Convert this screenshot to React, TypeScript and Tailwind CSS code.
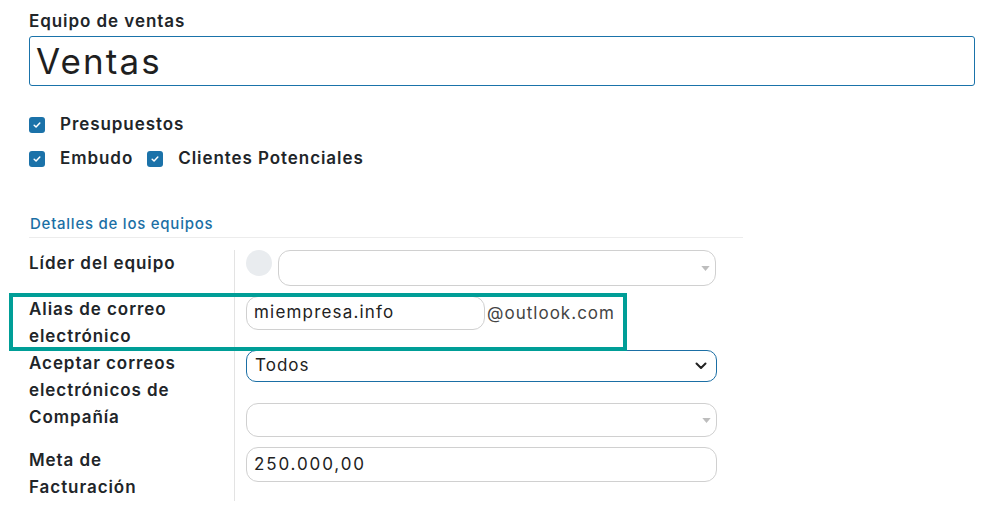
import React from 'react';

const font = { fontFamily: 'Inter, "Noto Sans", sans-serif' };

const Check: React.FC = () => (
  <span className="flex h-4 w-4 shrink-0 items-center justify-center rounded-[3px] bg-[#1b72a9]">
    <svg viewBox="0 0 16 16" className="h-[10px] w-[10px]" fill="none">
      <path d="M3.5 8.3l3 2.8 6-6.2" stroke="white" strokeWidth="2.4" strokeLinecap="round" strokeLinejoin="round" />
    </svg>
  </span>
);

const Caret: React.FC = () => (
  <svg viewBox="0 0 10 6" className="h-[5px] w-[9px]">
    <path d="M0 0h10L5 6z" fill="#bdbdbd" />
  </svg>
);

const Chevron: React.FC = () => (
  <svg viewBox="0 0 12 8" className="h-[8px] w-[12px]" fill="none">
    <path d="M1.5 1.5L6 6l4.5-4.5" stroke="#222" strokeWidth="2" strokeLinecap="round" strokeLinejoin="round" />
  </svg>
);

const Label: React.FC<{ children: React.ReactNode }> = ({ children }) => (
  <div className="text-[17px] font-semibold leading-[27px] tracking-[0.055em] text-[#212529]">{children}</div>
);

export default function App() {
  return (
    <div className="h-[515px] w-[990px] overflow-hidden bg-white pl-[29px] pt-[9px]" style={font}>
      <div className="text-[17px] font-semibold leading-[24px] tracking-[0.055em] text-[#212529]">Equipo de ventas</div>
      <div className="mt-[3px] flex h-[50px] w-[946px] items-center rounded-[3px] border border-[#1a73aa] pl-[6px] text-[35px] leading-none tracking-[0.06em] text-[#1f1f1f]">
        Ventas
      </div>

      <div className="mt-[27px] flex h-[24px] items-center gap-[15px]">
        <Check />
        <span className="text-[17px] font-semibold tracking-[0.055em] text-[#212529]">Presupuestos</span>
      </div>
      <div className="mt-[10px] flex h-[24px] items-center">
        <Check />
        <span className="ml-[15px] text-[17px] font-semibold tracking-[0.055em] text-[#212529]">Embudo</span>
        <span className="ml-[14px]"><Check /></span>
        <span className="ml-[15px] text-[17px] font-semibold tracking-[0.055em] text-[#212529]">Clientes Potenciales</span>
      </div>

      <div className="mt-[41px] h-[26px] w-[714px] border-b border-[#ececec] pl-[1px] text-[15px] font-medium leading-[24px] tracking-[0.05em] text-[#1b6fa5]">
        Detalles de los equipos
      </div>

      <div className="mt-[12px] grid w-[700px] grid-cols-[205px_1fr]">
        {/* Líder */}
        <div className="pb-[10px]"><Label>Líder del equipo</Label></div>
        <div className="flex items-start gap-[6px] border-l border-[#e3e3e3] pb-[10px] pl-[11px]">
          <span className="h-[26px] w-[26px] shrink-0 rounded-full bg-[#e9ecef]" />
          <div className="flex h-[36px] w-[438px] items-center justify-end rounded-[12px] border border-[#d0d0d0] pr-[5px]">
            <Caret />
          </div>
        </div>

        {/* Alias */}
        <div className="relative">
          <Label>Alias de correo<br />electrónico</Label>
          <div className="pointer-events-none absolute left-[-20px] top-[-3px] h-[58px] w-[618px] border-[4px] border-[#009e97]" />
        </div>
        <div className="flex items-start border-l border-[#e3e3e3] pl-[11px]">
          <div className="flex h-[34px] w-[239px] items-center rounded-[12px] border border-[#d0d0d0] pl-[7px] text-[17px] tracking-[0.07em] text-[#222]">
            miempresa.info
          </div>
          <span className="ml-[2px] mt-[4px] text-[17px] leading-[27px] tracking-[0.06em] text-[#444]">@outlook.com</span>
        </div>

        {/* Aceptar */}
        <div><Label>Aceptar correos<br />electrónicos de</Label></div>
        <div className="border-l border-[#e3e3e3] pl-[11px]">
          <div className="flex h-[32px] w-[471px] items-center justify-between rounded-[10px] border border-[#1b6fa5] pl-[8px] pr-[9px] text-[17px] tracking-[0.06em] text-[#222]">
            <span>Todos</span>
            <Chevron />
          </div>
        </div>

        {/* Compañía */}
        <div className="pb-[10px]"><Label>Compañía</Label></div>
        <div className="border-l border-[#e3e3e3] pb-[10px] pl-[11px]">
          <div className="-mt-[1px] flex h-[34px] w-[471px] items-center justify-end rounded-[12px] border border-[#d0d0d0] pr-[5px]">
            <Caret />
          </div>
        </div>

        {/* Meta */}
        <div><Label>Meta de<br />Facturación</Label></div>
        <div className="border-l border-[#e3e3e3] pl-[11px]">
          <div className="flex h-[35px] w-[471px] items-center rounded-[12px] border border-[#d0d0d0] pl-[7px] text-[17px] tracking-[0.11em] text-[#222]">
            250.000,00
          </div>
        </div>
      </div>
    </div>
  );
}
